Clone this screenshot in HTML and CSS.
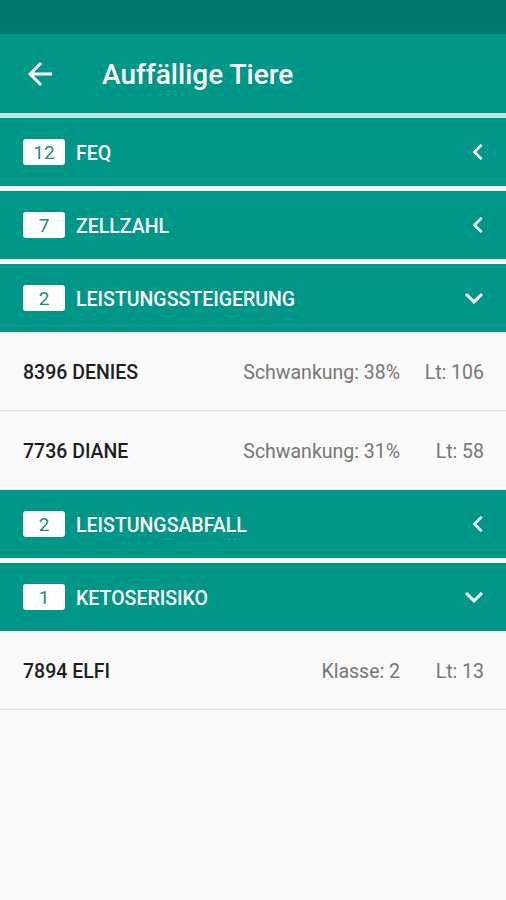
FILE: index.html
```html
<!DOCTYPE html>
<html lang="de">
<head>
    <meta charset="UTF-8">
    <meta name="viewport" content="width=device-width, initial-scale=1.0">
    <title>Auffällige Tiere</title>
    <link rel="stylesheet" href="styles.css">
</head>
<body>

    <!-- Status bar -->
    <div class="status-bar"></div>

    <!-- Toolbar -->
    <header class="toolbar">
        <svg class="back" viewBox="0 0 24 24">
            <path d="M20 11H7.83l5.59-5.59L12 4l-8 8 8 8 1.41-1.41L7.83 13H20v-2z" fill="#fff"/>
        </svg>
        <h1>Auffällige Tiere</h1>
    </header>

    <div class="groups">
        <div class="group">
            <div class="group-head">
                <span class="badge">12</span>
                <span class="group-title">FEQ</span>
                <svg class="chevron" viewBox="0 0 24 24"><path d="M15.4 7.4 14 6l-6 6 6 6 1.4-1.4L10.8 12z" fill="#fff"/></svg>
            </div>
        </div>

        <div class="group">
            <div class="group-head">
                <span class="badge">7</span>
                <span class="group-title">ZELLZAHL</span>
                <svg class="chevron" viewBox="0 0 24 24"><path d="M15.4 7.4 14 6l-6 6 6 6 1.4-1.4L10.8 12z" fill="#fff"/></svg>
            </div>
        </div>

        <div class="group open">
            <div class="group-head">
                <span class="badge">2</span>
                <span class="group-title">LEISTUNGSSTEIGERUNG</span>
                <svg class="expand" viewBox="0 0 24 24"><path d="M7.4 8.6 12 13.2l4.6-4.6L18 10l-6 6-6-6z" fill="#fff"/></svg>
            </div>
            <div class="row">
                <span class="name">8396 DENIES</span>
                <span class="detail">Schwankung: 38%</span>
                <span class="lt">Lt: 106</span>
            </div>
            <div class="row">
                <span class="name">7736 DIANE</span>
                <span class="detail">Schwankung: 31%</span>
                <span class="lt">Lt: 58</span>
            </div>
        </div>

        <div class="group">
            <div class="group-head">
                <span class="badge">2</span>
                <span class="group-title">LEISTUNGSABFALL</span>
                <svg class="chevron" viewBox="0 0 24 24"><path d="M15.4 7.4 14 6l-6 6 6 6 1.4-1.4L10.8 12z" fill="#fff"/></svg>
            </div>
        </div>

        <div class="group open">
            <div class="group-head">
                <span class="badge">1</span>
                <span class="group-title">KETOSERISIKO</span>
                <svg class="expand" viewBox="0 0 24 24"><path d="M7.4 8.6 12 13.2l4.6-4.6L18 10l-6 6-6-6z" fill="#fff"/></svg>
            </div>
            <div class="row">
                <span class="name">7894 ELFI</span>
                <span class="detail">Klasse: 2</span>
                <span class="lt">Lt: 13</span>
            </div>
        </div>
    </div>

</body>
</html>
```

FILE: styles.css
```css
body {
    font-family: Roboto, 'Noto Sans', sans-serif;
    margin: 0;
    padding: 0;
    background-color: #fafafa;
    min-height: 100vh;
}

.status-bar {
    height: 34px;
    background-color: #00796b;
}

.toolbar {
    height: 79px;
    background-color: #009688;
    display: flex;
    align-items: center;
    padding-left: 22px;
}

.toolbar .back {
    width: 36px;
    height: 36px;
}

.toolbar h1 {
    margin: 2px 0 0 44px;
    color: #fff;
    font-size: 28px;
    font-weight: 500;
}

.groups {
    border-top: 5px solid #bfe7e1;
}

.group + .group {
    border-top: 5px solid #f7fcfb;
}

.group.open + .group {
    border-top: 0;
}

.group-head {
    height: 68px;
    background-color: #009688;
    display: flex;
    align-items: center;
    padding: 0 12px 0 23px;
}

.badge {
    width: 42px;
    height: 26px;
    line-height: 27px;
    background: #fff;
    border-radius: 3px;
    color: #1f8b7e;
    font-size: 19px;
    text-align: center;
}

.group-title {
    flex: 1;
    margin: 2px 0 0 11px;
    color: #fff;
    font-size: 19.5px;
    font-weight: 500;
}

.chevron {
    width: 32px;
    height: 32px;
}

.expand {
    width: 36px;
    height: 36px;
    margin-right: 2px;
}

.row {
    height: 79px;
    box-sizing: border-box;
    padding: 3px 22px 0 23px;
    display: flex;
    align-items: center;
    border-bottom: 1px solid #e2e2e2;
    font-size: 19.5px;
}

.name {
    flex: 1;
    color: #1e1e1e;
    font-weight: 500;
}

.detail {
    color: #777;
}

.lt {
    width: 84px;
    text-align: right;
    color: #777;
}
```
